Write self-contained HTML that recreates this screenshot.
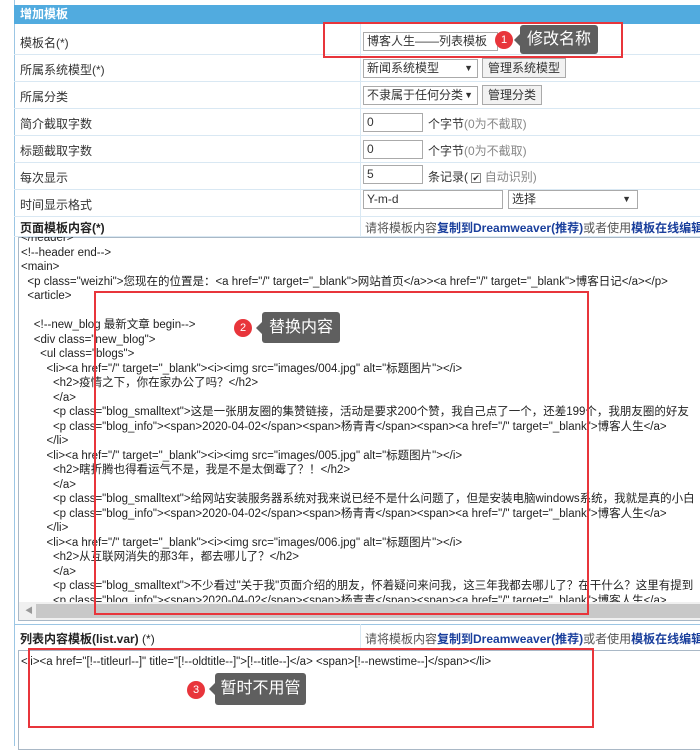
<!DOCTYPE html>
<html><head><meta charset="utf-8"><style>
*{margin:0;padding:0;box-sizing:border-box}
body{width:700px;height:746px;overflow:hidden;background:#fff;font-family:"Liberation Sans","Noto Sans CJK SC",sans-serif;font-size:12px;color:#333;position:relative}
.a{position:absolute;white-space:nowrap}
.hl{position:absolute;left:14px;right:0;height:1px;background:#d9e8f3}
.inp{position:absolute;border:1px solid #aaa;background:#fff;height:19px;padding-left:3px;line-height:17px;font-size:12px}
.btn{position:absolute;border:1px solid #aaa;background:#f2f2f2;height:20px;line-height:18px;text-align:center}
.b{color:#1a3f9c;font-weight:bold}
.code{position:absolute;left:19px;top:237px;width:700px;height:365px;overflow:hidden;font-size:11.5px;line-height:14.5px;color:#222;padding-left:2px}
.code div{white-space:pre;height:14.5px}
.red{position:absolute;border:2px solid #e8353b}
.badge{position:absolute;width:18px;height:18px;border-radius:50%;background:#e8353b;color:#fff;font-size:11px;text-align:center;line-height:18px}
.tip{position:absolute;background:#5f5f5f;color:#fff;font-size:16px;border-radius:3px;text-align:center}
.tip:before{content:"";position:absolute;left:-6px;top:50%;margin-top:-6px;border:6px solid transparent;border-left:0;border-right-color:#5f5f5f}
</style></head><body>
<div class="a" style="left:14px;top:0;width:1px;height:746px;background:#9cc6e4"></div>
<div class="a" style="left:14px;top:5px;right:0;height:19px;background:#51abdf;color:#fff;font-weight:bold;padding-left:6px;line-height:19px">增加模板</div>
<div class="a" style="left:360px;top:24px;width:1px;height:213px;background:#d9e8f3"></div>
<div class="hl" style="top:54px"></div><div class="hl" style="top:81px"></div><div class="hl" style="top:108px"></div><div class="hl" style="top:135px"></div><div class="hl" style="top:162px"></div><div class="hl" style="top:189px"></div><div class="hl" style="top:216px"></div><div class="hl" style="top:236px"></div>
<div class="a" style="left:20px;top:34px">模板名(*)</div>
<div class="a" style="left:20px;top:61px">所属系统模型(*)</div>
<div class="a" style="left:20px;top:88px">所属分类</div>
<div class="a" style="left:20px;top:115px">简介截取字数</div>
<div class="a" style="left:20px;top:142px">标题截取字数</div>
<div class="a" style="left:20px;top:169px">每次显示</div>
<div class="a" style="left:20px;top:196px">时间显示格式</div>
<div class="a" style="left:20px;top:219px;font-weight:bold;color:#222">页面模板内容(*)</div>
<div class="inp" style="left:363px;top:32px;width:135px">博客人生——列表模板</div>
<div class="inp" style="left:363px;top:59px;width:115px">新闻系统模型 <span style="float:right;font-size:9px;padding-right:4px">▼</span></div>
<div class="btn" style="left:482px;top:58px;width:84px">管理系统模型</div>
<div class="inp" style="left:363px;top:86px;width:115px">不隶属于任何分类<span style="float:right;font-size:9px;padding-right:4px">▼</span></div>
<div class="btn" style="left:482px;top:85px;width:60px">管理分类</div>
<div class="inp" style="left:363px;top:113px;width:60px">0</div><div class="a" style="left:428px;top:115px">个字节<span style="color:#888">(0为不截取)</span></div>
<div class="inp" style="left:363px;top:140px;width:60px">0</div><div class="a" style="left:428px;top:142px">个字节<span style="color:#888">(0为不截取)</span></div>
<div class="inp" style="left:363px;top:165px;width:60px">5</div><div class="a" style="left:428px;top:168px">条记录( <span style="display:inline-block;width:10px;height:10px;border:1px solid #888;font-size:9px;line-height:8px">✔</span> <span style="color:#888">自动识别)</span></div>
<div class="inp" style="left:363px;top:190px;width:140px">Y-m-d</div>
<div class="inp" style="left:508px;top:190px;width:130px">选择<span style="float:right;font-size:9px;padding-right:6px">▼</span></div>
<div class="a" style="left:365px;top:219px;color:#555">请将模板内容<span class="b">复制到Dreamweaver(推荐)</span>或者使用<span class="b">模板在线编辑</span>进</div>
<div class="a" style="left:18px;top:237px;width:690px;height:384px;border:1px solid #a9b8c6"></div>
<div class="code">
<div style="margin-top:-6px">&lt;/header&gt;</div>
<div>&lt;!--header end--&gt;</div>
<div>&lt;main&gt;</div>
<div>  &lt;p class="weizhi"&gt;您现在的位置是：&lt;a href="/" target="_blank"&gt;网站首页&lt;/a&gt;&gt;&lt;a href="/" target="_blank"&gt;博客日记&lt;/a&gt;&lt;/p&gt;</div>
<div>  &lt;article&gt;</div>
<div> </div>
<div>    &lt;!--new_blog 最新文章 begin--&gt;</div>
<div>    &lt;div class="new_blog"&gt;</div>
<div>      &lt;ul class="blogs"&gt;</div>
<div>        &lt;li&gt;&lt;a href="/" target="_blank"&gt;&lt;i&gt;&lt;img src="images/004.jpg" alt="标题图片"&gt;&lt;/i&gt;</div>
<div>          &lt;h2&gt;疫情之下，你在家办公了吗？&lt;/h2&gt;</div>
<div>          &lt;/a&gt;</div>
<div>          &lt;p class="blog_smalltext"&gt;这是一张朋友圈的集赞链接，活动是要求200个赞，我自己点了一个，还差199个，我朋友圈的好友</div>
<div>          &lt;p class="blog_info"&gt;&lt;span&gt;2020-04-02&lt;/span&gt;&lt;span&gt;杨青青&lt;/span&gt;&lt;span&gt;&lt;a href="/" target="_blank"&gt;博客人生&lt;/a&gt;</div>
<div>        &lt;/li&gt;</div>
<div>        &lt;li&gt;&lt;a href="/" target="_blank"&gt;&lt;i&gt;&lt;img src="images/005.jpg" alt="标题图片"&gt;&lt;/i&gt;</div>
<div>          &lt;h2&gt;瞎折腾也得看运气不是，我是不是太倒霉了？！&lt;/h2&gt;</div>
<div>          &lt;/a&gt;</div>
<div>          &lt;p class="blog_smalltext"&gt;给网站安装服务器系统对我来说已经不是什么问题了，但是安装电脑windows系统，我就是真的小白</div>
<div>          &lt;p class="blog_info"&gt;&lt;span&gt;2020-04-02&lt;/span&gt;&lt;span&gt;杨青青&lt;/span&gt;&lt;span&gt;&lt;a href="/" target="_blank"&gt;博客人生&lt;/a&gt;</div>
<div>        &lt;/li&gt;</div>
<div>        &lt;li&gt;&lt;a href="/" target="_blank"&gt;&lt;i&gt;&lt;img src="images/006.jpg" alt="标题图片"&gt;&lt;/i&gt;</div>
<div>          &lt;h2&gt;从互联网消失的那3年，都去哪儿了？&lt;/h2&gt;</div>
<div>          &lt;/a&gt;</div>
<div>          &lt;p class="blog_smalltext"&gt;不少看过"关于我"页面介绍的朋友，怀着疑问来问我，这三年我都去哪儿了？在干什么？这里有提到</div>
<div>          &lt;p class="blog_info"&gt;&lt;span&gt;2020-04-02&lt;/span&gt;&lt;span&gt;杨青青&lt;/span&gt;&lt;span&gt;&lt;a href="/" target="_blank"&gt;博客人生&lt;/a&gt;</div>
</div>
<div class="a" style="left:19px;top:602px;right:0;height:18px;background:#f0f0f0"></div>
<div class="a" style="left:36px;top:604px;right:0;height:14px;background:#c8c8c8"></div>
<div class="a" style="left:25px;top:605px;font-size:8px;color:#999">◀</div>
<div class="hl" style="top:624px;background:#9cc6e4"></div>
<div class="a" style="left:360px;top:624px;width:1px;height:26px;background:#d9e8f3"></div>
<div class="a" style="left:20px;top:630px;font-weight:bold;color:#222">列表内容模板(list.var) <span style="font-weight:normal">(*)</span></div>
<div class="a" style="left:365px;top:630px;color:#555">请将模板内容<span class="b">复制到Dreamweaver(推荐)</span>或者使用<span class="b">模板在线编辑</span>进</div>
<div class="a" style="left:18px;top:650px;width:690px;height:100px;border:1px solid #a9b8c6"></div>
<div class="a" style="left:21px;top:656px;font-size:11.5px;color:#222">&lt;li&gt;&lt;a href="[!--titleurl--]" title="[!--oldtitle--]"&gt;[!--title--]&lt;/a&gt; &lt;span&gt;[!--newstime--]&lt;/span&gt;&lt;/li&gt;</div>
<div class="red" style="left:323px;top:22px;width:300px;height:36px"></div>
<div class="badge" style="left:495px;top:31px">1</div>
<div class="tip" style="left:520px;top:25px;width:78px;height:29px;line-height:29px">修改名称</div>
<div class="red" style="left:94px;top:291px;width:495px;height:324px"></div>
<div class="badge" style="left:234px;top:319px">2</div>
<div class="tip" style="left:262px;top:312px;width:78px;height:31px;line-height:31px">替换内容</div>
<div class="red" style="left:28px;top:648px;width:566px;height:80px"></div>
<div class="badge" style="left:187px;top:681px">3</div>
<div class="tip" style="left:215px;top:673px;width:91px;height:32px;line-height:32px">暂时不用管</div>
</body></html>
